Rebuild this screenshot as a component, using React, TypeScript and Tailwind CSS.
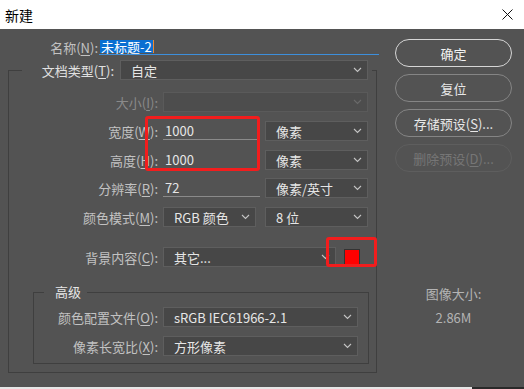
import * as React from "react";

const font = "font-['Noto_Sans_CJK_SC','Noto_Sans',sans-serif]";

function Chevron({ dim }: { dim?: boolean }) {
  return (
    <svg
      width="9"
      height="6"
      viewBox="0 0 9 6"
      className={dim ? "text-[#6a6a6a]" : "text-[#c4c4c4]"}
    >
      <path d="M1 1l3.5 3.5L8 1" fill="none" stroke="currentColor" strokeWidth="1.1" />
    </svg>
  );
}

function Key({ text, k, tail = ":" }: { text: string; k: string; tail?: string }) {
  return (
    <>
      {text}(<span className="underline underline-offset-2">{k}</span>){tail}
    </>
  );
}

function Select({
  width,
  value,
  disabled,
}: {
  width: string;
  value?: string;
  disabled?: boolean;
}) {
  return (
    <div
      className={[
        "flex h-[20px] shrink-0 items-center justify-between border pl-[10px] pr-[5px] text-[13px] leading-none",
        disabled
          ? "border-[#5a5a5a] bg-[#4d4d4d] text-[#777]"
          : "border-[#5e5e5e] bg-[#474747] text-[#e6e6e6]",
        width,
      ].join(" ")}
    >
      <span>{value}</span>
      <Chevron dim={disabled} />
    </div>
  );
}

function Field({ value }: { value: string }) {
  return (
    <div className="flex h-[19px] w-[97px] shrink-0 items-center self-start border-b border-[#8a8a8a] pl-[2px] text-[13px] leading-none text-[#e6e6e6]">
      {value}
    </div>
  );
}

function Row({
  mt,
  labelW,
  label,
  dim,
  children,
}: {
  mt: string;
  labelW: string;
  label: React.ReactNode;
  dim?: boolean;
  children: React.ReactNode;
}) {
  return (
    <div className={`flex h-[20px] items-center ${mt}`}>
      <div
        className={`${labelW} shrink-0 text-right text-[13px] leading-none ${
          dim ? "text-[#8a8a8a]" : "text-[#c2c2c2]"
        }`}
      >
        {label}
      </div>
      <div className="ml-[5px] flex h-full items-center">{children}</div>
    </div>
  );
}

function Button({ label, tone }: { label: React.ReactNode; tone: "main" | "normal" | "off" }) {
  const cls =
    tone === "main"
      ? "border-[#d6d6d6] text-[#f2f2f2]"
      : tone === "normal"
      ? "border-[#858585] text-[#e8e8e8]"
      : "border-[#5e5e5e] text-[#767676]";
  return (
    <div
      className={`flex h-[28px] w-[117px] items-center justify-center rounded-full border-[1.5px] text-[13px] leading-none ${cls}`}
    >
      {label}
    </div>
  );
}

export default function App() {
  return (
    <div className={`h-[389px] w-[524px] overflow-hidden ${font}`}>
      {/* title bar */}
      <div className="flex h-[29px] items-center justify-between bg-white pl-[5px] pr-[11px]">
        <span className="text-[14px] leading-none text-black">新建</span>
        <svg width="11" height="11" viewBox="0 0 11 11">
          <path d="M0.5 0.5l10 10M10.5 0.5l-10 10" stroke="#111" strokeWidth="1" />
        </svg>
      </div>

      <div className="relative flex h-[358px] bg-[#535353]">
        {/* left form */}
        <div className="w-[380px] shrink-0">
          <div className="mt-[11px] flex h-[15px] items-center">
            <div className="w-[98px] shrink-0 text-right text-[13px] leading-none text-[#c2c2c2]">
              <Key text="名称" k="N" />
            </div>
            <div className="ml-[1px] flex h-[15px] w-[280px] items-start border-b border-[#3d8fdc] pl-[1px]">
              <span className="flex h-[13px] items-center bg-[#0a6fd1] px-[1px] text-[13px] leading-none text-white">
                未标题-2
              </span>
              <span className="h-[13px] w-[1px] bg-[#f08a30]" />
            </div>
          </div>

          <fieldset className="ml-[8px] mt-[5px] w-[369px] border border-[#3f3f3f] pb-[8px] pl-[13px]">
            <legend className="p-0">
              <div className="flex h-[20px] items-center pr-[4px]">
                <div className="w-[92px] text-right text-[13px] leading-none text-[#e0e0e0]">
                  <Key text="文档类型" k="T" />
                </div>
                <div className="ml-[6px]">
                  <Select width="w-[248px]" value="自定" />
                </div>
              </div>
            </legend>

            <Row mt="mt-[12px]" labelW="w-[136px]" label={<Key text="大小" k="I" />} dim>
              <Select width="w-[205px]" disabled />
            </Row>
            <Row mt="mt-[9px]" labelW="w-[136px]" label={<Key text="宽度" k="W" />}>
              <Field value="1000" />
              <div className="ml-[5px]">
                <Select width="w-[103px]" value="像素" />
              </div>
            </Row>
            <Row mt="mt-[9px]" labelW="w-[136px]" label={<Key text="高度" k="H" />}>
              <Field value="1000" />
              <div className="ml-[5px]">
                <Select width="w-[103px]" value="像素" />
              </div>
            </Row>
            <Row mt="mt-[8px]" labelW="w-[136px]" label={<Key text="分辨率" k="R" />}>
              <Field value="72" />
              <div className="ml-[5px]">
                <Select width="w-[103px]" value="像素/英寸" />
              </div>
            </Row>
            <Row mt="mt-[9px]" labelW="w-[136px]" label={<Key text="颜色模式" k="M" />}>
              <Select width="w-[93px]" value="RGB 颜色" />
              <div className="ml-[9px]">
                <Select width="w-[103px]" value="8 位" />
              </div>
            </Row>
            <Row mt="mt-[20px]" labelW="w-[136px]" label={<Key text="背景内容" k="C" />}>
              <Select width="w-[173px]" value="其它..." />
              <div className="ml-[8px] h-[16px] w-[16px] border border-[#333] bg-[#ff0000]" />
            </Row>

            <fieldset className="ml-[11px] mt-[16px] w-[336px] border border-[#3f3f3f] pb-[7px] pl-[10px]">
              <legend className="px-[11px] pr-[6px] text-[13px] leading-[18px] text-[#e6e6e6]">高级</legend>
              <Row mt="mt-[6px]" labelW="w-[114px]" label={<Key text="颜色配置文件" k="O" />}>
                <Select width="w-[195px]" value="sRGB IEC61966-2.1" />
              </Row>
              <Row mt="mt-[9px]" labelW="w-[114px]" label={<Key text="像素长宽比" k="X" />}>
                <Select width="w-[195px]" value="方形像素" />
              </Row>
            </fieldset>
          </fieldset>
        </div>

        {/* right buttons */}
        <div className="flex flex-col pl-[15px] pt-[10px]">
          <div className="flex flex-col gap-[7px]">
            <Button label="确定" tone="main" />
            <Button label="复位" tone="normal" />
            <Button label={<Key text="存储预设" k="S" tail="..." />} tone="normal" />
            <Button label={<Key text="删除预设" k="D" tail="..." />} tone="off" />
          </div>
          <div className="mt-[113px] w-[117px] text-center text-[13px] leading-[18px] text-[#b4b4b4]">
            图像大小:
          </div>
          <div className="mt-[6px] w-[117px] text-center text-[13px] leading-[18px] text-[#b4b4b4]">
            2.86M
          </div>
        </div>

        {/* red annotation boxes */}
        <div className="absolute left-[145px] top-[87px] h-[55px] w-[115px] rounded-[3px] border-[3px] border-[#f21d1d]" />
        <div className="absolute left-[326px] top-[208px] h-[30px] w-[51px] rounded-[3px] border-[3px] border-[#f21d1d]" />
      </div>

      <div className="flex h-[2px]">
        <div className="flex-1 bg-[#e6e6e6]" />
        <div className="w-[52px] bg-[#2a2a2a]" />
      </div>
    </div>
  );
}
